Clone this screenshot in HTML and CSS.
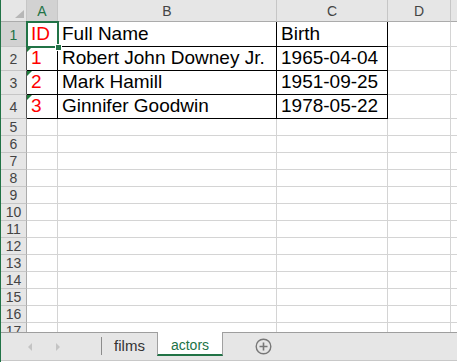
FILE: index.html
```html
<!DOCTYPE html>
<html lang="en">
<head>
    <meta charset="UTF-8">
    <title>actors</title>
    <link rel="stylesheet" href="styles.css">
</head>
<body>
    <div class="app">
        <div class="sheet">
            <div class="grid">
                <div class="corner"></div>
                <div class="colhead sel">A</div>
                <div class="colhead">B</div>
                <div class="colhead">C</div>
                <div class="colhead">D</div>
                <div class="colhead"></div>

                <div class="rowhead sel edge">1</div>
                <div class="cell tb num">ID</div>
                <div class="cell tb">Full Name</div>
                <div class="cell tb">Birth</div>
                <div class="cell"></div>
                <div class="cell"></div>

                <div class="rowhead edge">2</div>
                <div class="cell tb num flag">1</div>
                <div class="cell tb">Robert John Downey Jr.</div>
                <div class="cell tb">1965-04-04</div>
                <div class="cell"></div>
                <div class="cell"></div>

                <div class="rowhead edge">3</div>
                <div class="cell tb num flag">2</div>
                <div class="cell tb">Mark Hamill</div>
                <div class="cell tb">1951-09-25</div>
                <div class="cell"></div>
                <div class="cell"></div>

                <div class="rowhead edge">4</div>
                <div class="cell tb num flag">3</div>
                <div class="cell tb">Ginnifer Goodwin</div>
                <div class="cell tb">1978-05-22</div>
                <div class="cell"></div>
                <div class="cell"></div>

                <div class="rowhead">5</div><div class="cell"></div><div class="cell"></div><div class="cell"></div><div class="cell"></div><div class="cell"></div>
                <div class="rowhead">6</div><div class="cell"></div><div class="cell"></div><div class="cell"></div><div class="cell"></div><div class="cell"></div>
                <div class="rowhead">7</div><div class="cell"></div><div class="cell"></div><div class="cell"></div><div class="cell"></div><div class="cell"></div>
                <div class="rowhead">8</div><div class="cell"></div><div class="cell"></div><div class="cell"></div><div class="cell"></div><div class="cell"></div>
                <div class="rowhead">9</div><div class="cell"></div><div class="cell"></div><div class="cell"></div><div class="cell"></div><div class="cell"></div>
                <div class="rowhead">10</div><div class="cell"></div><div class="cell"></div><div class="cell"></div><div class="cell"></div><div class="cell"></div>
                <div class="rowhead">11</div><div class="cell"></div><div class="cell"></div><div class="cell"></div><div class="cell"></div><div class="cell"></div>
                <div class="rowhead">12</div><div class="cell"></div><div class="cell"></div><div class="cell"></div><div class="cell"></div><div class="cell"></div>
                <div class="rowhead">13</div><div class="cell"></div><div class="cell"></div><div class="cell"></div><div class="cell"></div><div class="cell"></div>
                <div class="rowhead">14</div><div class="cell"></div><div class="cell"></div><div class="cell"></div><div class="cell"></div><div class="cell"></div>
                <div class="rowhead">15</div><div class="cell"></div><div class="cell"></div><div class="cell"></div><div class="cell"></div><div class="cell"></div>
                <div class="rowhead">16</div><div class="cell"></div><div class="cell"></div><div class="cell"></div><div class="cell"></div><div class="cell"></div>
                <div class="rowhead">17</div><div class="cell"></div><div class="cell"></div><div class="cell"></div><div class="cell"></div><div class="cell"></div>
            </div>
            <div class="selection"><span class="handle"></span></div>
        </div>

        <div class="tabs">
            <div class="nav">
                <span class="arrow left"></span>
                <span class="arrow right"></span>
            </div>
            <div class="tab">films</div>
            <div class="tab active">actors</div>
            <div class="add">
                <svg width="17" height="17" viewBox="0 0 17 17">
                    <circle cx="8.5" cy="8.5" r="7.3" fill="none" stroke="#777" stroke-width="1.4"/>
                    <path d="M8.5 4.5v8M4.5 8.5h8" stroke="#777" stroke-width="1.6"/>
                </svg>
            </div>
        </div>
    </div>
</body>
</html>
```

FILE: styles.css
```css
body {
    margin: 0;
    width: 457px;
    height: 362px;
    overflow: hidden;
    background: #fff;
    font-family: "Liberation Sans", Arial, sans-serif;
}
.app {
    border-left: 1px solid #217346;
    height: 362px;
}
.sheet {
    position: relative;
    height: 332px;
    overflow: hidden;
}
.grid {
    display: grid;
    grid-template-columns: 26px 31px 219px 111px 63px 1fr;
    grid-template-rows: 22px 25px 24px 24px 24px repeat(13, 17px);
}
.corner {
    position: relative;
    background: #e6e6e6;
    border-right: 1px solid #c6c6c6;
    border-bottom: 1px solid #ababab;
}
.corner::after {
    content: "";
    position: absolute;
    right: 2px;
    bottom: 3px;
    border-left: 9px solid transparent;
    border-bottom: 8px solid #b7b7b7;
}
.colhead {
    background: #e6e6e6;
    border-right: 1px solid #c6c6c6;
    border-bottom: 1px solid #ababab;
    color: #444;
    font-size: 14px;
    text-align: center;
    line-height: 22px;
}
.rowhead {
    background: #e6e6e6;
    border-right: 1px solid #ababab;
    border-bottom: 1px solid #c6c6c6;
    color: #444;
    font-size: 14px;
    display: flex;
    align-items: flex-end;
    justify-content: center;
    line-height: 16px;
}
.rowhead.edge {
    border-right-color: #555;
    padding-bottom: 3px;
}
.sel {
    background: #d2d2d2;
    color: #217346;
}
.cell {
    position: relative;
    border-right: 1px solid #d4d4d4;
    border-bottom: 1px solid #d4d4d4;
    font-size: 19px;
    color: #000;
    padding: 0 3px 1px 4px;
    display: flex;
    align-items: flex-end;
    white-space: nowrap;
    overflow: hidden;
}
.tb {
    border-right-color: #000;
    border-bottom-color: #000;
}
.num {
    color: #f00;
    padding-left: 4px;
}
.flag::before {
    content: "";
    position: absolute;
    top: 0;
    left: 0;
    border-top: 5px solid #1e7b3c;
    border-right: 5px solid transparent;
}
.selection {
    position: absolute;
    left: 25px;
    top: 21px;
    width: 33px;
    height: 27px;
    box-sizing: border-box;
    border: 2px solid #217346;
}
.handle {
    position: absolute;
    right: -5px;
    bottom: -5px;
    width: 5px;
    height: 5px;
    background: #217346;
    border: 1px solid #fff;
}
.tabs {
    display: flex;
    align-items: flex-start;
    height: 27px;
    background: #e6e6e6;
    border-top: 1px solid #9e9e9e;
    border-bottom: 1px solid #c8c8c8;
}
.nav {
    width: 100px;
    height: 27px;
    display: flex;
    align-items: center;
    gap: 24px;
    padding-left: 27px;
    box-sizing: border-box;
}
.arrow {
    width: 0;
    height: 0;
    border-top: 4px solid transparent;
    border-bottom: 4px solid transparent;
}
.arrow.left {
    border-right: 4px solid #c4c4c4;
}
.arrow.right {
    border-left: 4px solid #c4c4c4;
}
.tab {
    height: 18px;
    margin-top: 4px;
    width: 55px;
    border-left: 1px solid #8c8c8c;
    color: #333;
    font-size: 15px;
    text-align: center;
    line-height: 18px;
}
.tab.active {
    margin-top: -1px;
    height: 22px;
    width: 64px;
    background: #fff;
    border-left: 1px solid #a0a0a0;
    border-right: 1px solid #a0a0a0;
    border-bottom: 2px solid #217346;
    color: #217346;
    font-size: 14px;
    line-height: 26px;
}
.add {
    margin-left: 32px;
    height: 27px;
    display: flex;
    align-items: center;
}
```
